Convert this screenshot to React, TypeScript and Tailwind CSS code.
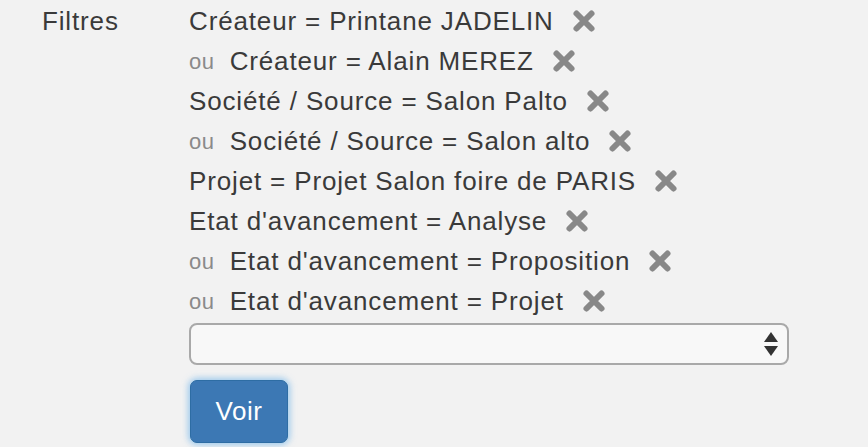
import React from "react";

const rows: { ou?: boolean; text: string }[] = [
  { text: "Créateur = Printane JADELIN" },
  { ou: true, text: "Créateur = Alain MEREZ" },
  { text: "Société / Source = Salon Palto" },
  { ou: true, text: "Société / Source = Salon alto" },
  { text: "Projet = Projet Salon foire de PARIS" },
  { text: "Etat d'avancement = Analyse" },
  { ou: true, text: "Etat d'avancement = Proposition" },
  { ou: true, text: "Etat d'avancement = Projet" },
];

function XIcon() {
  return (
    <svg width="24" height="24" viewBox="0 0 24 24" className="inline-block">
      <path d="M4.5 4.5 L19.5 19.5 M19.5 4.5 L4.5 19.5" stroke="#888888" strokeWidth="6" strokeLinecap="round" />
    </svg>
  );
}

export default function App() {
  return (
    <div
      className="w-[868px] h-[447px] bg-[#f2f2f2] text-[#333333] overflow-hidden flex"
      style={{ fontFamily: '"Liberation Sans", Arial, sans-serif' }}
    >
      <div className="w-[189px] pl-[42px] pt-[1px] text-[26px] tracking-[0.85px] leading-[40px] text-[#3a3a3a]">Filtres</div>
      <div className="flex flex-col pt-[1px]">
        {rows.map((r, i) => (
          <div key={i} className="flex items-center h-[40px] text-[26px] tracking-[0.85px] text-[#3a3a3a]">
            {r.ou && <span className="text-[22px] tracking-[0.6px] text-[#8a8a8a] mr-[15px]">ou</span>}
            <span>{r.text}</span>
            <span className="ml-[18px] flex items-center"><XIcon /></span>
          </div>
        ))}
        <div className="mt-[2px] w-[600px] h-[42px] rounded-[8px] border-2 border-[#a9a9a9] bg-[#f8f8f8] flex items-center justify-end pr-[8px]">
          <svg width="16" height="26" viewBox="0 0 16 26">
            <path d="M8 1 L15 11 L1 11 Z" fill="#333" />
            <path d="M1 15 L15 15 L8 25 Z" fill="#333" />
          </svg>
        </div>
        <div className="mt-[15px] pl-[1px]">
          <button className="w-[98px] h-[63px] rounded-[7px] bg-[#3c78b4] border border-[#2e6da4] text-white text-[26px] tracking-[0.5px] shadow-[0_0_6px_2px_rgba(102,175,233,0.6)]">
            Voir
          </button>
        </div>
      </div>
    </div>
  );
}
